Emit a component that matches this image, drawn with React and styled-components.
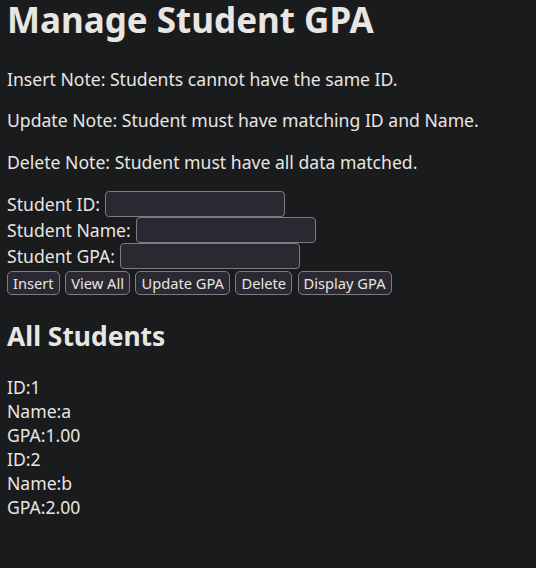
import React from "react";
import styled, { createGlobalStyle } from "styled-components";

const GlobalStyle = createGlobalStyle`
  html, body {
    background: #1a1b1d;
  }
  body {
    margin: 0;
    padding: 0 7px;
    color: #e8e6e3;
    font-family: "Noto Sans", sans-serif;
    font-size: 17.6px;
  }
`;

const Title = styled.h1`
  font-size: 35px;
  font-weight: bold;
  margin: -4px 0 23.6px;
`;

const Note = styled.p`
  margin: 17.6px 0;
`;

const Form = styled.div`
  margin-top: 15.6px;
`;

const Row = styled.div`
  height: 26px;
  display: flex;
  align-items: center;
  gap: 5px;
`;

const Field = styled.input`
  box-sizing: border-box;
  width: 180px;
  height: 26px;
  background: #2a2931;
  border: 1px solid #7d7c86;
  border-radius: 4px;
  color: #e8e6e3;
  font: 14.67px "Noto Sans", sans-serif;
  padding: 2px 4px;
`;

const Buttons = styled.div`
  display: flex;
  gap: 5.5px;
  margin-top: 2px;
`;

const Button = styled.button`
  box-sizing: border-box;
  height: 24px;
  background: #2a2931;
  border: 1px solid #7d7c86;
  border-radius: 5px;
  color: #e8e6e3;
  font: 14.67px "Noto Sans", sans-serif;
  padding: 0 5px;
  line-height: 20px;
`;

const SubTitle = styled.h2`
  font-size: 26.4px;
  font-weight: bold;
  margin: 22.5px 0 21px;
`;

const Line = styled.div`
  line-height: 24px;
`;

const students = [
  { id: 1, name: "a", gpa: "1.00" },
  { id: 2, name: "b", gpa: "2.00" },
];

export default function App() {
  return (
    <>
      <GlobalStyle />
      <Title>Manage Student GPA</Title>
      <Note>Insert Note: Students cannot have the same ID.</Note>
      <Note>Update Note: Student must have matching ID and Name.</Note>
      <Note>Delete Note: Student must have all data matched.</Note>
      <Form>
        <Row>
          Student ID: <Field />
        </Row>
        <Row>
          Student Name: <Field />
        </Row>
        <Row>
          Student GPA: <Field />
        </Row>
        <Buttons>
          <Button>Insert</Button>
          <Button>View All</Button>
          <Button>Update GPA</Button>
          <Button>Delete</Button>
          <Button>Display GPA</Button>
        </Buttons>
      </Form>
      <SubTitle>All Students</SubTitle>
      {students.map((s) => (
        <div key={s.id}>
          <Line>ID:{s.id}</Line>
          <Line>Name:{s.name}</Line>
          <Line>GPA:{s.gpa}</Line>
        </div>
      ))}
    </>
  );
}
